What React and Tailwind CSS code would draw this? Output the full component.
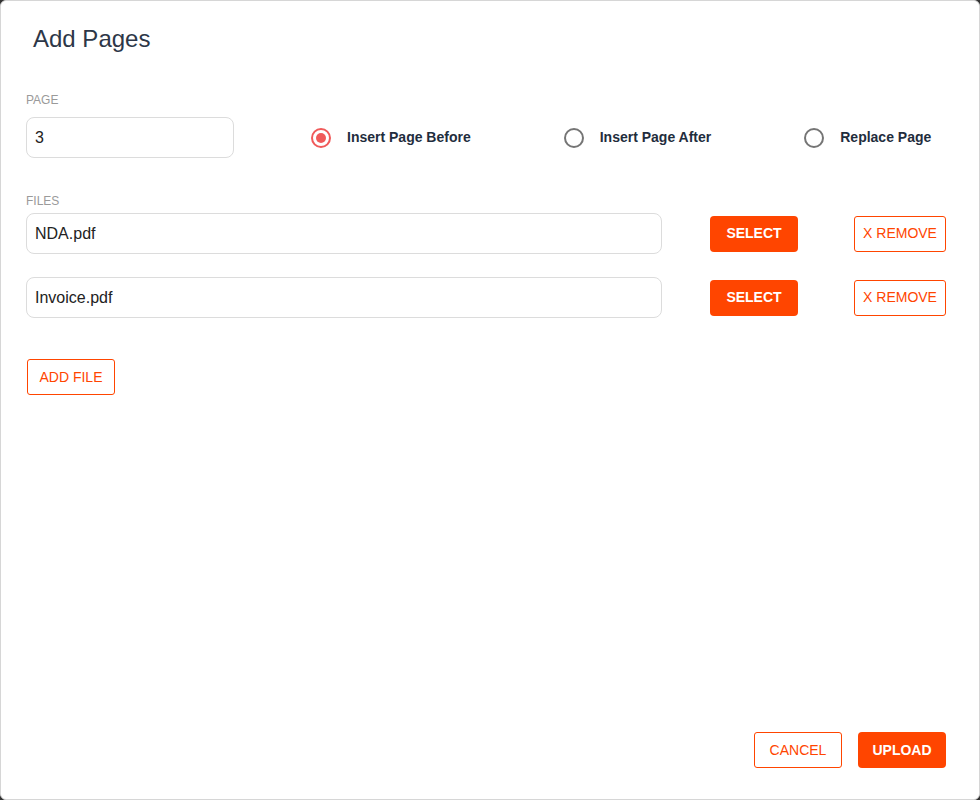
export default function App() {
  const F = { fontFamily: '"Liberation Sans", Arial, sans-serif' };
  const Radio = ({ on, label, w }) => (
    <div className="flex items-center" style={{}}>
      <span className={`w-[20px] h-[20px] rounded-full border-2 flex items-center justify-center ${on ? "border-[#f05a5a]" : "border-[#757575]"}`}>
        {on && <span className="w-[10px] h-[10px] rounded-full bg-[#f05a5a]" />}
      </span>
      <span className="ml-[16px] text-[14px] font-bold text-[#1f2d3d]">{label}</span>
    </div>
  );
  const FileRow = ({ name }) => (
    <div className="flex items-center h-[41px]">
      <div className="w-[636px] h-[41px] border border-[#dcdcdc] rounded-[8px] flex items-center px-[8px] text-[16px] text-[#222]">{name}</div>
      <button className="ml-[48px] w-[88px] h-[36px] bg-[#ff4500] rounded-[4px] text-white text-[14px] font-bold">SELECT</button>
      <button className="ml-[56px] w-[92px] h-[36px] border border-[#ff4500] rounded-[3px] text-[#ff4500] text-[14px]">X REMOVE</button>
    </div>
  );
  return (
    <div className="w-[980px] h-[800px] bg-[#333]" style={F}>
      <div className="w-full h-full bg-white border border-[#d6d6d6] rounded-[6px] flex flex-col pl-[25px] pr-[33px]">
        <h1 className="mt-[24px] ml-[7px] text-[24px] leading-[28px] text-[#2d3748]">Add Pages</h1>
        <div className="mt-[40px] text-[12px] leading-[14px] text-[#9a9a9a]">PAGE</div>
        <div className="mt-[10px] flex items-center">
          <div className="w-[208px] h-[41px] border border-[#dcdcdc] rounded-[8px] flex items-center px-[8px] text-[16px] text-[#222]">3</div>
          <div className="ml-[77px]"><Radio on label="Insert Page Before" /></div>
          <div className="ml-[93px]"><Radio label="Insert Page After" /></div>
          <div className="ml-[93px]"><Radio label="Replace Page" /></div>
        </div>
        <div className="mt-[36px] text-[12px] leading-[14px] text-[#9a9a9a]">FILES</div>
        <div className="mt-[5px] flex flex-col gap-[23px]">
          <FileRow name="NDA.pdf" />
          <FileRow name="Invoice.pdf" />
        </div>
        <button className="mt-[41px] ml-[1px] self-start w-[88px] h-[36px] border border-[#ff4500] rounded-[3px] text-[#ff4500] text-[14px]">ADD FILE</button>
        <div className="flex-1" />
        <div className="mb-[31px] flex justify-end gap-[16px]">
          <button className="w-[88px] h-[36px] border border-[#ff4500] rounded-[3px] text-[#ff4500] text-[14px]">CANCEL</button>
          <button className="w-[88px] h-[36px] bg-[#ff4500] rounded-[4px] text-white text-[14px] font-bold">UPLOAD</button>
        </div>
      </div>
    </div>
  );
}
